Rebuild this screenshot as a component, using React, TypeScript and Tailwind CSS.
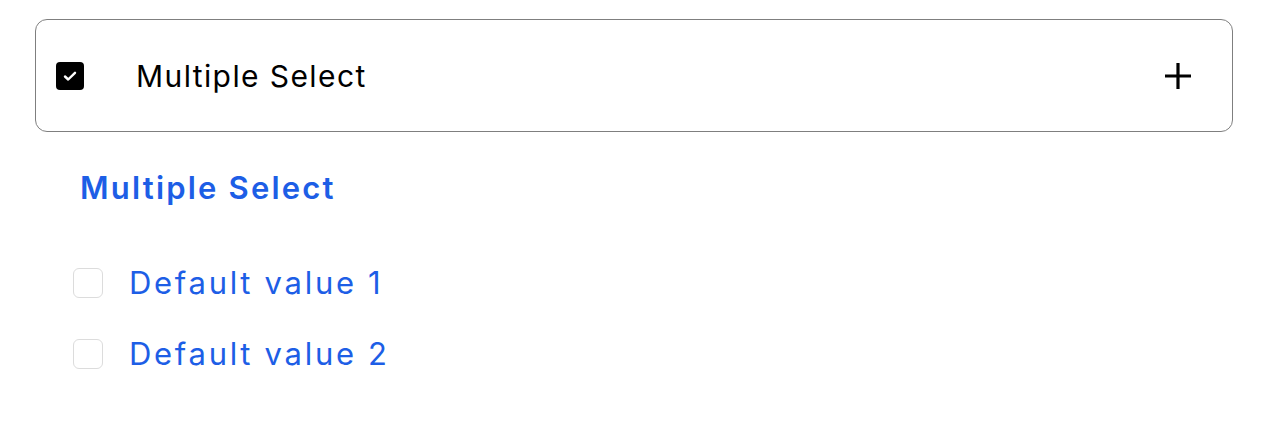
import React from 'react';

const font = { fontFamily: 'Inter, "Noto Sans", sans-serif' };

const Option: React.FC<{ label: string }> = ({ label }) => (
  <div className="flex items-center h-[71px]">
    <div className="w-[30px] h-[30px] rounded-[6px] border border-[#dcdcdc] bg-white" />
    <span className="ml-[26px] text-[31px] leading-none tracking-[2.7px] text-[#1d5ee6] font-normal">{label}</span>
  </div>
);

export default function App() {
  return (
    <div className="min-h-screen bg-white" style={font}>
      <div className="pt-[19px] pl-[35px] w-[1233px]">
        {/* Header card */}
        <div className="h-[113px] border border-[#7f7f7f] rounded-[12px] flex items-center pl-[20px] pr-[40px]">
          <div className="w-[28px] h-[28px] rounded-[4px] bg-black flex items-center justify-center">
            <svg width="18" height="18" viewBox="0 0 18 18" fill="none">
              <path d="M4 9.5l3.2 3L14 5.8" stroke="white" strokeWidth="2.4" strokeLinecap="round" strokeLinejoin="round" />
            </svg>
          </div>
          <span className="ml-[52px] text-[30px] leading-none tracking-[1.4px] text-black">Multiple Select</span>
          <svg className="ml-auto" width="28" height="28" viewBox="0 0 28 28">
            <path d="M14 1v26M1 14h26" stroke="black" strokeWidth="3.2" />
          </svg>
        </div>

        {/* Field */}
        <div className="pl-[45px] pt-[36px]">
          <h2 className="text-[31px] leading-[40px] font-semibold tracking-[2.2px] text-[#1d5ee6]">Multiple Select</h2>
        </div>
        <div className="pl-[38px] pt-[39px]">
          <Option label="Default value 1" />
          <Option label="Default value 2" />
        </div>
      </div>
    </div>
  );
}
